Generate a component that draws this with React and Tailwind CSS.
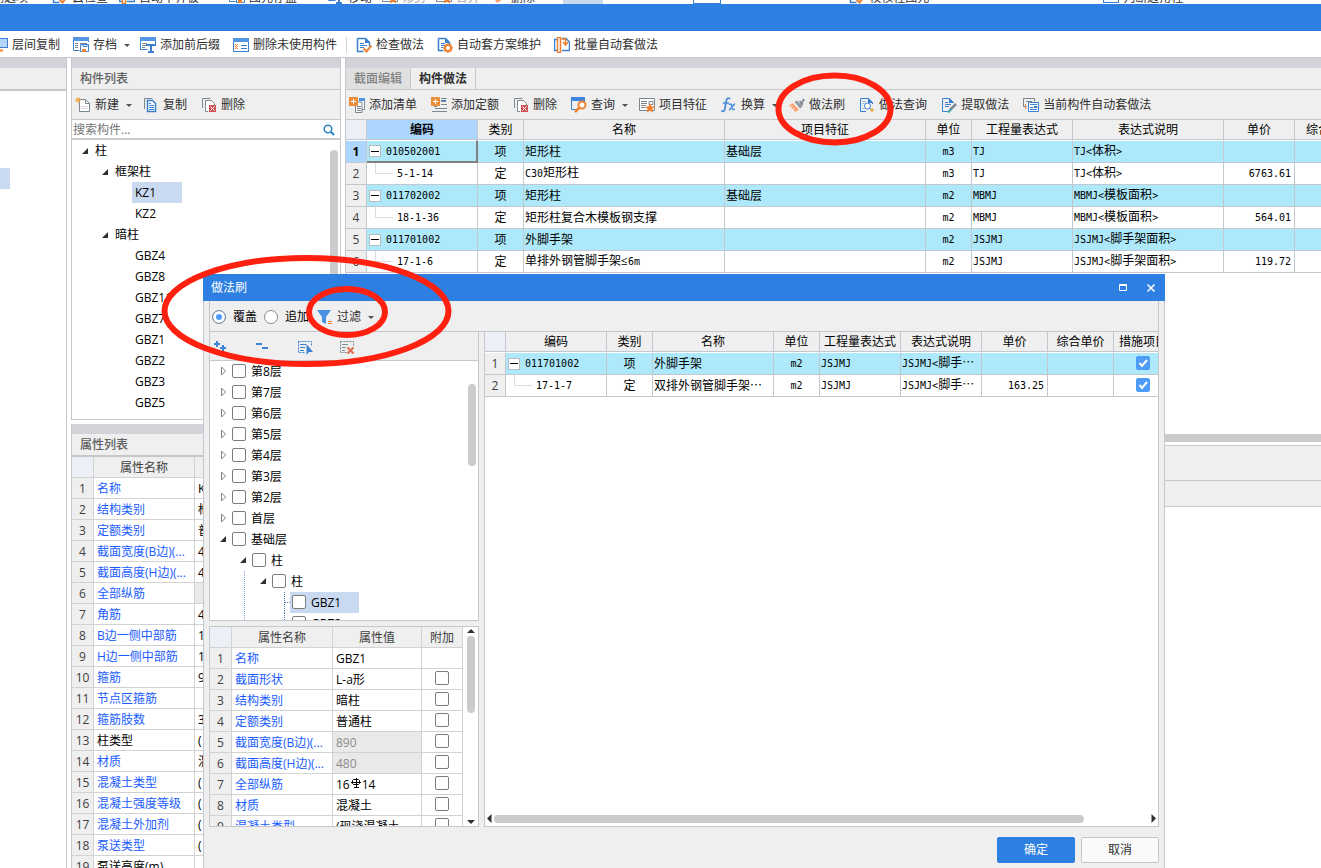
import { Fragment } from 'react';

const BLUE = '#3b7fd0';
const ORANGE = '#ee8130';
const GRAY = '#7d8791';

/* 16x16 toolbar icons */
const ICONS = {
  monitor: (
    <>
      <rect x="3.5" y="1.5" width="12" height="9" fill="#b5d5fb" stroke={BLUE} />
      <path d="M6 13.5h5" stroke={ORANGE} strokeWidth="2" />
    </>
  ),
  archive: (
    <>
      <path d="M.5 1v12.500h6M.5 1h15v4" stroke={BLUE} fill="none" />
      <path d="M0 0h16v4H0z" fill="#5596e4" />
      <path d="M2 6.500h3M2 8.500h3M2 10.500h3M7 6.500h7" stroke={GRAY} />
      <path d="M7.500 7.500h8v7h-8z" fill="#fff" stroke={BLUE} />
      <path d="M10 7.500v2h4v-2" stroke={BLUE} fill="none" />
      <path d="M9 12h4v3H9z" fill={ORANGE} />
    </>
  ),
  affix: (
    <>
      <path d="M.5 1v11.500h7M15.500 1v8" stroke={BLUE} fill="none" />
      <path d="M0 0h16v4H0z" fill="#5596e4" />
      <path d="M2 6.500h5M2 8.500h5M2 10.500h3" stroke={GRAY} />
      <path d="M6 7h9v2H6zM10 7h2v9h-2zM8 14h6v2H8z" fill={BLUE} />
    </>
  ),
  unused: (
    <>
      <rect x=".5" y="1.500" width="15" height="13" fill="#fff" stroke={BLUE} />
      <path d="M0 1h16v4H0z" fill="#5596e4" />
      <path d="M2 7h1v1H2zM4 7h1v1H4zM3 8h1v1H3zM2 9h1v1H2zM4 9h1v1H4zM3 10h1v1H3zM2 11h1v1H2zM4 11h1v1H4z" fill={ORANGE} />
      <path d="M8 8.500h6M8 11.500h6" stroke={BLUE} />
    </>
  ),
  check: (
    <>
      <path d="M1.500 1.500h8l4 4v4M1.500 1.500v13h6" fill="none" stroke={BLUE} strokeWidth="1.500" />
      <path d="M9 1v5h5z" fill={BLUE} />
      <path d="M4 6.500h4M4 8.500h7M4 10.500h4" stroke={BLUE} />
      <path d="M7.500 11.500l3 3 5-6" fill="none" stroke={ORANGE} strokeWidth="2" />
    </>
  ),
  scheme: (
    <>
      <path d="M1.500 1.500h7l4 4v2M1.500 1.500v12h5" fill="none" stroke={BLUE} strokeWidth="1.500" />
      <path d="M8 1v5h5z" fill={BLUE} />
      <path d="M4 6.500h4M4 8.500h4M4 10.500h2" stroke={BLUE} />
      <circle cx="11" cy="11" r="3" fill="#fff" stroke={ORANGE} strokeWidth="2" />
      <path d="M11 6v2M11 14v2M6 11h2M14 11h2M7.500 7.500l1.500 1.500M13 13l1.500 1.500M14.500 7.500l-1.500 1.500M9 13l-1.500 1.500" stroke={ORANGE} strokeWidth="1.500" />
    </>
  ),
  batch: (
    <>
      <path d="M3 2.500H.5v11H3" fill="none" stroke={BLUE} strokeWidth="1.500" />
      <path d="M3.500.5h3v15h-3z" fill="#fff" stroke={ORANGE} strokeWidth="1.500" />
      <path d="M8 1.500h4l3.500 3.500v8.500H8" fill="none" stroke={BLUE} strokeWidth="1.500" />
      <path d="M7.500 2h4V7M9 5l2.500 3L14 5" fill="none" stroke={ORANGE} strokeWidth="1.500" />
    </>
  ),
  create: (
    <>
      <path d="M4.500 2.500h6l4 4v8h-10z" fill="#fff" stroke={GRAY} />
      <path d="M10.500 2.500v4h4" fill="none" stroke={GRAY} />
      <path d="M6 9.500h7M6 11.500h7" stroke="#e2d8e2" />
      <path d="M1 1l4 4M5 1L1 5M3 0v6M0 3h6" stroke="#f0a63c" />
    </>
  ),
  copy: (
    <>
      <path d="M1.500 12V1.500h8" fill="none" stroke={GRAY} />
      <path d="M4.500 3.500h5l3 3v8h-8z" fill="#fff" stroke={BLUE} strokeWidth="1.500" />
      <path d="M6 8.500h5M6 10.500h5M6 12.500h5M6 6.500h2" stroke={BLUE} />
    </>
  ),
  remove: (
    <>
      <path d="M1.500 11V1.500h8" fill="none" stroke={GRAY} />
      <path d="M7 14.500H4.500v-11h6l3 3V8" fill="#fff" stroke={GRAY} />
      <path d="M8 8h7v7H8z" fill="#d05058" />
      <path d="M9.500 9.500l4 4M13.500 9.500l-4 4" stroke="#fff" />
    </>
  ),
  addList: (
    <>
      <path d="M11 2.500h4.500v10H13M6.500 9v6.500H13V5H9" fill="#fff" stroke={GRAY} />
      <path d="M10 1h6v3h-6z" fill="#5596e4" />
      <path d="M8 9.500h4M8 11.500h4M8 13.500h4" stroke={GRAY} />
      <path d="M0 0h9v9H0z" fill="#ea8f3c" />
      <path d="M4.500 2v5M2 4.500h5" stroke="#fff" />
    </>
  ),
  addQuota: (
    <>
      <path d="M10 1.500h6M10 4.500h5M10 7.500h6M4 11.500h12M1 14.500h15M3 9.500h3" stroke={GRAY} />
      <path d="M10 3.500h5" stroke={BLUE} />
      <path d="M0 0h9v9H0z" fill="#ea8f3c" />
      <path d="M4.500 2v5M2 4.500h5" stroke="#fff" />
    </>
  ),
  query: (
    <>
      <path d="M.500 1v11.500h4M13.500 2v3" fill="none" stroke={BLUE} />
      <path d="M0 0h14v4H0z" fill="#3f86dc" />
      <circle cx="11" cy="8" r="3.500" fill="#fff" stroke={ORANGE} strokeWidth="2" />
      <path d="M8.500 10.500l-4.500 4.500" stroke={ORANGE} strokeWidth="2.500" />
    </>
  ),
  feature: (
    <>
      <path d="M.500 1.500h15v12H.5z" fill="#fff" stroke={GRAY} />
      <path d="M2 4.500h6M2 6.500h6M2 8.500h5M2 10.500h4M10 4.500h4v3h-4z" fill="none" stroke={GRAY} />
      <path d="M11 6l1.500 3.300 3.500.4-2.600 2.400.7 3.500-3.100-1.800-3.100 1.800.7-3.500L6 9.700l3.500-.4z" fill={ORANGE} />
    </>
  ),
  fx: (
    <g fill="none" stroke="#4a8ddb" strokeLinecap="round">
      <path d="M8.500 1.500c-2-1-3 .5-3.300 2.500l-1.400 8c-.4 2-1.300 3-2.800 2" strokeWidth="1.800" />
      <path d="M2.500 6h5" strokeWidth="1.500" />
      <path d="M8.500 7.500c1.500-1 2 0 2.300 1.500l.7 2.500c.4 1.200 1 1.500 1.800.8M13.500 7l-5 5.800" strokeWidth="1.500" />
    </g>
  ),
  brush: (
    <>
      <path d="M10 4l1.500-.5L12.500 5 14 1.500l2 1.500-2.500 3 1 1-2 2z" fill={GRAY} />
      <path d="M5.500 5L8 3.500l5.500 6L11 11.500z" fill="#8d99a5" />
      <path d="M0 8.500L4.500 6l6 6L6.500 15z" fill="#fba070" />
      <path d="M4.500 6.500l6 6" stroke="#fff" />
      <path d="M2 10l1.500-1M4 12.500l1.500-1.500" stroke="#fff" />
    </>
  ),
  search: (
    <>
      <path d="M7 14.500H1.500v-13h8l4 4V7" fill="none" stroke={BLUE} />
      <path d="M9 1v5h5z" fill={BLUE} />
      <path d="M3.500 4.500h3M3.500 6.500h2M3.500 11.500h2" stroke="#8fb8ea" />
      <circle cx="8.500" cy="9" r="3" fill="#fff" stroke={BLUE} />
      <path d="M10.500 11l1 1" stroke={BLUE} />
      <path d="M13 11l2 2-2 2-2-2z" fill="#eda02f" />
    </>
  ),
  extract: (
    <>
      <path d="M7 14.500H1.500v-13h7l4 4" fill="none" stroke={BLUE} />
      <path d="M8 1v5h5z" fill={BLUE} />
      <path d="M4 5.500h3M4 7.500h6M4 9.500h4" stroke={BLUE} />
      <path d="M15 7l-6 6" stroke={GRAY} strokeWidth="2.500" />
      <path d="M10 12.500l-3 3" stroke="#35a5b5" strokeWidth="2" />
    </>
  ),
  autoSet: (
    <>
      <path d="M.500 1.500h11v3M.500 1.500v8h3" fill="none" stroke={GRAY} />
      <path d="M3 4.500h6" stroke={GRAY} />
      <path d="M2.500 7v6" stroke={ORANGE} strokeDasharray="2 1" />
      <path d="M5.500 5.500h10v9h-10z" fill="#fff" stroke={BLUE} />
      <path d="M7 7.500h7M7 10.500h3M7 12.500h7M11 9.500h3v1h-3z" stroke={BLUE} />
    </>
  ),
  filter: (
    <>
      <path d="M0 1h14L9 8v7l-4-2V8z" fill="#4a90e2" />
      <path d="M11 12.500h4M11 14.500h4" stroke={ORANGE} />
    </>
  ),
  expand: <path d="M4 1v6M1 4h6M10 5v6M7 8h6" stroke="#3f83d3" strokeWidth="2" />,
  collapse: <path d="M1 4h6M7 8h6" stroke="#3f83d3" strokeWidth="2" />,
  select: (
    <>
      <path d="M1.500 1.500h13v4M1.500 1.500v11h7" fill="none" stroke={BLUE} strokeDasharray="2 1" />
      <path d="M3 4.500h6M3 7.500h5M3 10.500h4" stroke={BLUE} />
      <path d="M9.500 4v11l2.500-3h4z" fill="#3a7fd3" />
    </>
  ),
  deselect: (
    <>
      <path d="M1.500 1.500h13v4M1.500 1.500v11h6" fill="none" stroke={GRAY} strokeDasharray="2 1" />
      <path d="M3 4.500h6M3 7.500h4M3 10.500h3" stroke={GRAY} />
      <path d="M8.500 7.500l6 6M14.500 7.500l-6 6" stroke="#dd6a4c" strokeWidth="2" />
    </>
  ),
};

function Icon({ name }) {
  return (
    <svg className="size-4 shrink-0" viewBox="0 0 16 16" fill="none" aria-hidden="true">
      {ICONS[name]}
    </svg>
  );
}

function Caret() {
  return (
    <svg className="-mr-1.5 w-3 h-4 shrink-0" viewBox="0 0 12 16" aria-hidden="true">
      <path d="M3 7h6L6 10z" fill="#505050" />
    </svg>
  );
}

function ToolButton({ icon, label, caret }) {
  return (
    <button type="button" className="flex items-center gap-1 shrink-0 whitespace-nowrap text-[#303030]">
      <Icon name={icon} />
      {label}
      {caret && <Caret />}
    </button>
  );
}

function Band() {
  return <div className="h-[10px] shrink-0 bg-[#d3d4d9]"></div>;
}

/* Narrow fixed-pitch Latin beside full-width Chinese */
function Mono({ children }) {
  return children.split(/([\x20-\x7e]+)/).map((part, i) =>
    i % 2 ? (
      <span key={i} className="font-['DejaVu_Sans_Mono',monospace] text-[10px]">{part}</span>
    ) : (
      <Fragment key={i}>{part}</Fragment>
    )
  );
}

function Check({ checked = false, label }) {
  return (
    <span className="relative block size-[14px] shrink-0">
      <input
        type="checkbox"
        aria-label={label}
        defaultChecked={checked}
        className="peer block size-[14px] appearance-none rounded-[2px] border border-[#7c7c7c] bg-white checked:border-[#4d9df8] checked:bg-[#4d9df8]"
      />
      <svg className="absolute inset-0 hidden peer-checked:block pointer-events-none" viewBox="0 0 14 14" fill="none">
        <path d="M3.500 7l2.500 3 5-6" stroke="#fff" strokeWidth="2" />
      </svg>
    </span>
  );
}

function Arrow({ open }) {
  return (
    <svg className="size-2 shrink-0" viewBox="0 0 8 8" aria-hidden="true">
      {open ? (
        <path d="M7 1v6H1z" fill="#303030" />
      ) : (
        <path d="M2.500 0l4 4-4 4z" fill="#fff" stroke="#808080" />
      )}
    </svg>
  );
}

/* ---------- left hand tree ---------- */

const COMPONENTS = [
  { label: '柱', pad: 'pl-[9px]', open: true },
  { label: '框架柱', pad: 'pl-[29px]', open: true },
  { label: 'KZ1', selected: true },
  { label: 'KZ2' },
  { label: '暗柱', pad: 'pl-[29px]', open: true },
  { label: 'GBZ4' },
  { label: 'GBZ8' },
  { label: 'GBZ11' },
  { label: 'GBZ7' },
  { label: 'GBZ1' },
  { label: 'GBZ2' },
  { label: 'GBZ3' },
  { label: 'GBZ5' },
];

function ComponentList() {
  return (
    <section className="h-[362px] shrink-0 flex flex-col border-x border-b border-[#c6c8cd]">
      <Band />
      <h2 className="h-[22px] pl-2 flex items-center bg-[#efefef] border-b border-[#c6c8cd] font-medium text-[#606060]">构件列表</h2>
      <div className="h-[30px] px-[3px] flex items-center gap-[14px] bg-[#efefef] border-b border-[#c6c8cd]">
        <ToolButton icon="create" label="新建" caret />
        <ToolButton icon="copy" label="复制" />
        <ToolButton icon="remove" label="删除" />
      </div>
      <div className="h-5 pt-px pr-1 flex items-center border-b-2 border-[#cbccd0]">
        <input aria-label="搜索构件" placeholder="搜索构件..." className="flex-1 min-w-0 pl-px outline-none placeholder:text-[#757575]" />
        <svg className="size-3 mr-px" viewBox="0 0 12 12" fill="none" stroke="#2a82c4" strokeWidth="1.5">
          <circle cx="5" cy="5" r="3.800" />
          <path d="M8 8l3 3" strokeWidth="2" />
        </svg>
      </div>
      <div className="flex-1 min-h-0 flex">
        <ul className="flex-1">
          {COMPONENTS.map((c) =>
            c.pad ? (
              <li key={c.label} className={`h-[21px] flex items-center gap-[6px] ${c.pad}`}>
                <Arrow open />
                {c.label}
              </li>
            ) : (
              <li key={c.label} className="h-[21px] pl-[60px] flex">
                <span className={`w-[50px] pl-[3px] flex items-center ${c.selected ? 'bg-[#c9d9f0]' : ''}`}>{c.label}</span>
              </li>
            )
          )}
        </ul>
        <div className="w-2 mr-0.5 mt-[10px] mb-4 rounded-full bg-[#cbcbcb]"></div>
      </div>
    </section>
  );
}

/* ---------- property tables ---------- */

const COLUMN_PROPS = [
  ['名称', 'K'],
  ['结构类别', '框'],
  ['定额类别', '普'],
  ['截面宽度(B边)(...', '4'],
  ['截面高度(H边)(...', '4'],
  ['全部纵筋', '', 'gray'],
  ['角筋', '4'],
  ['B边一侧中部筋', '1'],
  ['H边一侧中部筋', '1'],
  ['箍筋', '9'],
  ['节点区箍筋', ''],
  ['箍筋肢数', '3'],
  ['柱类型', '(', 'black'],
  ['材质', '混'],
  ['混凝土类型', '('],
  ['混凝土强度等级', '('],
  ['混凝土外加剂', '('],
  ['泵送类型', '('],
  ['泵送高度(m)', '', 'black'],
];

const PROP_TH = 'pt-px border-r border-b border-[#d2d2d2] font-normal text-[#404040]';
const PROP_TD = 'border-r border-b border-[#d2d2d2] whitespace-nowrap overflow-hidden';

function PropertyList() {
  return (
    <section className="mt-1 flex-1 min-h-0 overflow-hidden border-x border-[#c6c8cd]">
      <Band />
      <h2 className="h-[23px] pl-2 flex items-center bg-[#efefef] border-b-2 border-[#c6c6c6] font-medium text-[#606060]">属性列表</h2>
      <table className="w-full table-fixed border-separate border-spacing-0">
        <thead>
          <tr className="h-[21px]">
            <th className={`w-[22px] ${PROP_TH} bg-[#ecf0f6]`}></th>
            <th className={`w-[101px] ${PROP_TH} bg-[#efefef]`}>属性名称</th>
            <th className={`${PROP_TH} bg-[#efefef]`}>属性值</th>
          </tr>
        </thead>
        <tbody>
          {COLUMN_PROPS.map(([name, value, tone], i) => (
            <tr key={name} className="h-[21px]">
              <td className={`${PROP_TD} pt-px bg-[#efefef] text-center text-[#404040]`}>{i + 1}</td>
              <td className={`${PROP_TD} pt-px pl-[3px] ${tone === 'black' ? 'text-black' : 'text-[#1a5cff]'}`}>{name}</td>
              <td className={`${PROP_TD} pt-px pl-[3px] ${tone === 'gray' ? 'bg-[#e9e9e9]' : ''}`}>{value}</td>
            </tr>
          ))}
        </tbody>
      </table>
    </section>
  );
}

function Rebar() {
  return (
    <svg className="inline-block w-3 h-[10px] -mt-1" viewBox="0 0 12 10" fill="none" stroke="#000">
      <path d="M3.500 1.500h5l1 1v3l-1 1h-5l-1-1v-3zM6.500 0v9M4 9.500h5M1 4.500h10" />
    </svg>
  );
}

const BRUSH_PROPS = [
  ['名称', 'GBZ1'],
  ['截面形状', 'L-a形'],
  ['结构类别', '暗柱'],
  ['定额类别', '普通柱'],
  ['截面宽度(B边)(...', '890', true],
  ['截面高度(H边)(...', '480', true],
  ['全部纵筋', <>16<Rebar />14</>],
  ['材质', '混凝土'],
  ['混凝土类型', '(现浇混凝土'],
];

function BrushProperties() {
  return (
    <div className="mt-[5px] h-[201px] flex overflow-hidden bg-white border border-[#c6c8cd]">
      <table className="w-[253px] shrink-0 self-start table-fixed border-separate border-spacing-0">
        <thead>
          <tr className="h-[21px]">
            <th className={`w-[22px] ${PROP_TH} bg-[#ecf0f6]`}></th>
            <th className={`w-[101px] ${PROP_TH} bg-[#efefef]`}>属性名称</th>
            <th className={`w-[89px] ${PROP_TH} bg-[#efefef]`}>属性值</th>
            <th className={`w-[41px] ${PROP_TH} bg-[#efefef]`}>附加</th>
          </tr>
        </thead>
        <tbody>
          {BRUSH_PROPS.map(([name, value, locked], i) => (
            <tr key={name} className="h-[21px]">
              <td className={`${PROP_TD} pt-px bg-[#efefef] text-center text-[#404040]`}>{i + 1}</td>
              <td className={`${PROP_TD} pt-px pl-[3px] text-[#1a5cff]`}>{name}</td>
              <td className={`${PROP_TD} pt-px pl-[3px] ${locked ? 'bg-[#e9e9e9] text-[#8c8c8c]' : ''}`}>{value}</td>
              <td className={`${PROP_TD} pb-0.5 pr-px`}>
                {i > 0 && (
                  <div className="flex justify-center">
                    <Check label={name} />
                  </div>
                )}
              </td>
            </tr>
          ))}
        </tbody>
      </table>
      <div className="flex-1 flex flex-col items-center justify-between">
        <svg className="w-2 h-2" viewBox="0 0 8 8"><path d="M4 2l4 4H0z" fill="#303030" /></svg>
        <div className="w-2 flex-1 mt-px mb-[105px] rounded-full bg-[#cbcbcb]"></div>
        <svg className="w-2 h-2" viewBox="0 0 8 8"><path d="M4 6l4-4H0z" fill="#303030" /></svg>
      </div>
    </div>
  );
}

/* ---------- bill tables ---------- */

function CodeCell({ code, child }) {
  return child ? (
    <div className="h-full pl-2 flex">
      <span className="w-[18px] h-[11px] border-l border-b border-[#dcdcdc]"></span>
      <span className="pl-1 flex items-center"><Mono>{code}</Mono></span>
    </div>
  ) : (
    <div className="pl-0.5 flex items-center gap-[5px]">
      <button type="button" aria-label="折叠" className="size-3 flex items-center justify-center bg-white border border-[#b9bcc2]">
        <span className="w-2 h-px bg-black"></span>
      </button>
      <span><Mono>{code}</Mono></span>
    </div>
  );
}

function BillTable({ width, cols, rows, active }) {
  return (
    <table className={`${width} table-fixed border-separate border-spacing-0`}>
      <thead>
        <tr className="h-5">
          <th className="w-[21px] bg-[#ecf0f6] border-r border-b border-[#c3c7cf]"></th>
          {cols.map((c, i) => (
            <th
              key={c.label}
              className={`${c.width} pt-px border-r border-b border-[#c3c7cf] whitespace-nowrap ${
                active && i === 0 ? 'bg-[#add6ff] font-bold' : 'bg-[#efefef] font-normal'
              }`}
            >
              {c.label}
            </th>
          ))}
        </tr>
      </thead>
      <tbody>
        {rows.map((row, r) => {
          const parent = row[1] === '项';
          const h = r === 0 ? 'h-[23px] border-t border-t-white' : 'h-[22px]';
          return (
            <tr key={r}>
              <td
                className={`${h} pt-px border-r border-b border-[#c3c7cf] text-center ${
                  active && r === 0 ? 'bg-[#add6ff] font-bold text-black' : 'bg-[#efefef] text-[#404040]'
                }`}
              >
                {r + 1}
              </td>
              {cols.map((c, i) => (
                <td
                  key={c.label}
                  className={`${h} whitespace-nowrap overflow-hidden ${parent ? 'bg-[#aee9fb]' : 'bg-white'} ${
                    active && r === 0 && i === 0 ? 'border-r-2 border-b-2 border-[#808080]' : 'border-r border-b border-[#c3c7cf]'
                  } ${c.cell}`}
                >
                  {i === 0 ? (
                    <CodeCell code={row[0]} child={!parent} />
                  ) : c.check ? (
                    <div className="flex justify-center"><Check checked label={c.label} /></div>
                  ) : (
                    <Mono>{row[i] || ''}</Mono>
                  )}
                </td>
              ))}
            </tr>
          );
        })}
      </tbody>
    </table>
  );
}

const MAIN_COLS = [
  { label: '编码', width: 'w-[111px]', cell: '' },
  { label: '类别', width: 'w-[46px]', cell: 'text-center' },
  { label: '名称', width: 'w-[201px]', cell: 'pl-px' },
  { label: '项目特征', width: 'w-[201px]', cell: 'pl-px' },
  { label: '单位', width: 'w-[46px]', cell: 'text-center' },
  { label: '工程量表达式', width: 'w-[101px]', cell: 'pl-px' },
  { label: '表达式说明', width: 'w-[151px]', cell: 'pl-px' },
  { label: '单价', width: 'w-[71px]', cell: 'pr-[3px] text-right' },
  { label: '综合单价', width: 'w-[71px]', cell: '' },
];

const MAIN_ROWS = [
  ['010502001', '项', '矩形柱', '基础层', 'm3', 'TJ', 'TJ<体积>', ''],
  ['5-1-14', '定', 'C30矩形柱', '', 'm3', 'TJ', 'TJ<体积>', '6763.61'],
  ['011702002', '项', '矩形柱', '基础层', 'm2', 'MBMJ', 'MBMJ<模板面积>', ''],
  ['18-1-36', '定', '矩形柱复合木模板钢支撑', '', 'm2', 'MBMJ', 'MBMJ<模板面积>', '564.01'],
  ['011701002', '项', '外脚手架', '', 'm2', 'JSJMJ', 'JSJMJ<脚手架面积>', ''],
  ['17-1-6', '定', '单排外钢管脚手架≤6m', '', 'm2', 'JSJMJ', 'JSJMJ<脚手架面积>', '119.72'],
];

const BRUSH_COLS = [
  { label: '编码', width: 'w-[101px]', cell: '' },
  { label: '类别', width: 'w-[46px]', cell: 'text-center' },
  { label: '名称', width: 'w-[121px]', cell: 'pl-px' },
  { label: '单位', width: 'w-[46px]', cell: 'text-center' },
  { label: '工程量表达式', width: 'w-[81px]', cell: 'pl-px' },
  { label: '表达式说明', width: 'w-[81px]', cell: 'pl-px' },
  { label: '单价', width: 'w-[66px]', cell: 'pr-[3px] text-right' },
  { label: '综合单价', width: 'w-[66px]', cell: '' },
  { label: '措施项目', width: 'w-[59px]', cell: 'pb-px', check: true },
];

const BRUSH_ROWS = [
  ['011701002', '项', '外脚手架', 'm2', 'JSJMJ', 'JSJMJ<脚手⋯', ''],
  ['17-1-7', '定', '双排外钢管脚手架⋯', 'm2', 'JSJMJ', 'JSJMJ<脚手⋯', '163.25'],
];

function Practice() {
  return (
    <section className="ml-1 flex-1 min-w-0 flex flex-col border-l border-[#c6c8cd]">
      <Band />
      <div role="tablist" className="h-[22px] flex bg-[#efefef] border-b border-[#c6c8cd]">
        <button type="button" role="tab" className="w-[65px] bg-[#e0e0e0] border-r border-[#c6c8cd] font-medium text-[#808080]">截面编辑</button>
        <button type="button" role="tab" aria-selected="true" className="w-[65px] border-r border-[#c6c8cd] font-bold text-[#303030]">构件做法</button>
      </div>
      <div className="h-[30px] px-[3px] flex items-center gap-[14px] bg-[#efefef] border-b border-[#c6c8cd]">
        <ToolButton icon="addList" label="添加清单" />
        <ToolButton icon="addQuota" label="添加定额" />
        <ToolButton icon="remove" label="删除" />
        <ToolButton icon="query" label="查询" caret />
        <ToolButton icon="feature" label="项目特征" />
        <ToolButton icon="fx" label="换算" caret />
        <ToolButton icon="brush" label="做法刷" />
        <ToolButton icon="search" label="做法查询" />
        <ToolButton icon="extract" label="提取做法" />
        <ToolButton icon="autoSet" label="当前构件自动套做法" />
      </div>
      <div className="h-[314px] overflow-hidden bg-white">
        <BillTable width="w-[1020px]" cols={MAIN_COLS} rows={MAIN_ROWS} active />
      </div>
      <div className="h-2 bg-[#cbcbcb]"></div>
      <div className="mt-[3px] h-9 bg-[#efefef] border-y border-[#c6c8cd]"></div>
      <div className="h-[26px] bg-[#efefef] border-b border-[#c6c8cd]"></div>
    </section>
  );
}

/* ---------- dialog ---------- */

const FLOORS = ['第8层', '第7层', '第6层', '第5层', '第4层', '第3层', '第2层', '首层'];

function TreeRow({ label, pad, open }) {
  return (
    <li className={`h-[21px] pb-px flex items-center ${pad}`}>
      <Arrow open={open} />
      <label className="ml-[5px] flex items-center gap-[5px]">
        <Check label={label} />
        <span className="pt-px">{label}</span>
      </label>
    </li>
  );
}

function LeafRow({ label, selected }) {
  return (
    <li className="h-[21px] pl-[34px] flex">
      <span className="ml-[40px] w-[6px] flex items-center border-l border-dotted border-[#4c7fb8]">
        <span className="w-full border-t border-dotted border-[#4c7fb8]"></span>
      </span>
      <label className={`w-[69px] pl-0.5 pb-px flex items-center gap-[5px] ${selected ? 'bg-[#c9d9f0]' : ''}`}>
        <Check label={label} />
        <span className="pt-px">{label}</span>
      </label>
    </li>
  );
}

function FloorTree() {
  return (
    <div className="h-[260px] flex overflow-hidden bg-white border-b border-[#c6c8cd]">
      <ul className="flex-1">
        {FLOORS.map((f) => <TreeRow key={f} label={f} pad="pl-[9px]" />)}
        <TreeRow label="基础层" pad="pl-[9px]" open />
        <TreeRow label="柱" pad="pl-[29px]" open />
        <li className="relative">
          <span className="absolute left-[34px] inset-y-0 border-l border-dotted border-[#7fa5cf]"></span>
          <ul>
            <TreeRow label="柱" pad="pl-[49px]" open />
            <LeafRow label="GBZ1" selected />
            <LeafRow label="GBZ2" />
          </ul>
        </li>
      </ul>
      <div className="w-2 h-[82px] mt-[23px] mr-0.5 rounded-full bg-[#cbcbcb]"></div>
    </div>
  );
}

function Radio({ label, checked }) {
  return (
    <label className="flex items-center gap-[7px]">
      <input
        type="radio"
        name="mode"
        defaultChecked={checked}
        className="size-[14px] appearance-none rounded-full border border-[#8a8a8a] bg-white checked:bg-[#4d9df8] checked:shadow-[inset_0_0_0_3px_#fff]"
      />
      {label}
    </label>
  );
}

function BrushDialog() {
  return (
    <div role="dialog" aria-label="做法刷" className="absolute left-[203px] right-[156px] top-[274px] bottom-0 flex flex-col bg-[#efefef]">
      <header className="h-[27px] shrink-0 pl-2 pr-[9px] flex items-center bg-[#2d80e2] text-white">
        <span className="flex-1">做法刷</span>
        <button type="button" aria-label="最大化" className="mr-[18px]">
          <svg className="block size-[10px]" viewBox="0 0 10 10" fill="none" stroke="#fff">
            <path d="M1.500 1.500h7v6h-7zM1 2.500h8" />
          </svg>
        </button>
        <button type="button" aria-label="关闭">
          <svg className="block size-[10px]" viewBox="0 0 10 10" fill="none" stroke="#fff" strokeWidth="1.500">
            <path d="M1.500 1.500l7 7M8.500 1.500l-7 7" />
          </svg>
        </button>
      </header>
      <div className="flex-1 min-h-0 px-[5px] flex flex-col border-x border-[#c0c8d4]">
        <div className="h-[31px] shrink-0 pl-0.5 pt-px flex items-center border-x border-b border-[#c6c8cd]">
          <Radio label="覆盖" checked />
          <span className="ml-[7px]"><Radio label="追加" /></span>
          <span className="ml-2"><ToolButton icon="filter" label="过滤" caret /></span>
        </div>
        <div className="flex">
          <div className="w-[270px] shrink-0">
            <div className="border-x border-[#c6c8cd]">
              <div className="h-[29px] pl-[3px] pt-1 flex items-center gap-[26px] border-b border-[#c6c8cd]">
                <button type="button" aria-label="展开"><Icon name="expand" /></button>
                <button type="button" aria-label="收起"><Icon name="collapse" /></button>
                <button type="button" aria-label="全选"><Icon name="select" /></button>
                <button type="button" aria-label="取消选择"><Icon name="deselect" /></button>
              </div>
              <FloorTree />
            </div>
            <BrushProperties />
          </div>
          <div className="ml-[5px] flex-1 min-w-0 flex flex-col justify-between overflow-hidden bg-white border-x border-b border-[#c6c8cd]">
            <BillTable width="w-[688px]" cols={BRUSH_COLS} rows={BRUSH_ROWS} />
            <div className="h-[15px] flex items-center">
              <svg className="size-[9px] shrink-0" viewBox="0 0 9 9"><path d="M6.500 0v9l-4.500-4.500z" fill="#303030" /></svg>
              <div className="flex-1">
                <div className="w-[90%] h-2 rounded-full bg-[#cbcbcb]"></div>
              </div>
              <svg className="size-[9px] shrink-0" viewBox="0 0 9 9"><path d="M2.500 0v9l4.500-4.500z" fill="#303030" /></svg>
            </div>
          </div>
        </div>
        <footer className="pt-[10px] flex justify-end gap-1.5">
          <button type="button" className="w-[78px] h-[26px] rounded-[2px] bg-[#2d80e2] text-white">确定</button>
          <button type="button" className="w-[78px] h-[26px] rounded-[2px] border border-[#c3c7cf] bg-[#fafafa] text-[#303030]">取消</button>
        </footer>
      </div>
    </div>
  );
}

/* ---------- page ---------- */

const RIBBON = [
  { label: '删选项', gap: '-ml-2' },
  { label: '云检查', gap: 'ml-[24px]', icon: 'check' },
  { label: '自动平齐板', gap: 'ml-[11px]', icon: 'batch' },
  { label: '图元存盘', gap: 'ml-[30px]', icon: 'archive' },
  { label: '移动', gap: 'ml-[31px]', icon: 'affix' },
  { label: '修剪', gap: 'ml-[10px]', icon: 'feature', muted: true },
  { label: '合并', gap: 'ml-[10px]', icon: 'feature', muted: true },
  { label: '删除', gap: 'ml-[11px]', icon: 'brush' },
];

function Ribbon() {
  return (
    <div className="h-1 shrink-0 flex items-end overflow-hidden whitespace-nowrap leading-3">
      {RIBBON.map((r) => (
        <span key={r.label} className={`${r.gap} flex items-end gap-1 ${r.muted ? 'text-[#a5a5a5]' : 'text-[#303030]'}`}>
          {r.icon && <Icon name={r.icon} />}
          {r.label}
        </span>
      ))}
      <span className="ml-[28px] w-10 h-1 bg-[#c9d9f0]"></span>
      <span className="ml-[90px] w-7 h-1 border-x border-b border-[#3b7fd0]"></span>
      <span className="ml-[128px] flex items-end gap-1 text-[#303030]"><Icon name="check" />校核柱图元</span>
      <span className="ml-[174px] flex items-end gap-1 text-[#303030]"><Icon name="unused" />判断边角柱</span>
    </div>
  );
}

function App() {
  return (
    <div className="relative h-screen flex flex-col overflow-hidden bg-white text-black text-[12px] leading-4 font-['Open_Sans','Noto_Sans_CJK_SC',sans-serif]">
      <Ribbon />
      <div className="h-[27px] shrink-0 bg-[#2d80e2]"></div>

      <div className="h-[26px] shrink-0 -ml-2 pt-0.5 flex items-center gap-[13px] overflow-hidden">
        <ToolButton icon="monitor" label="层间复制" />
        <ToolButton icon="archive" label="存档" caret />
        <ToolButton icon="affix" label="添加前后缀" />
        <ToolButton icon="unused" label="删除未使用构件" />
        <span className="-mx-1 w-px h-4 bg-[#d0d2d6]"></span>
        <ToolButton icon="check" label="检查做法" />
        <ToolButton icon="scheme" label="自动套方案维护" />
        <ToolButton icon="batch" label="批量自动套做法" />
      </div>

      <main className="flex-1 min-h-0 flex border-t border-[#c6c8cd]">
        <aside className="w-[67px] shrink-0 border-r border-[#c6c8cd]">
          <Band />
          <div className="h-[23px] bg-[#efefef] border-b-2 border-[#c6c6c6]"></div>
          <div className="mt-[77px] w-[10px] h-[21px] bg-[#c9d9f0]"></div>
        </aside>
        <div className="ml-1 w-[270px] shrink-0 flex flex-col">
          <ComponentList />
          <PropertyList />
        </div>
        <Practice />
      </main>

      <BrushDialog />

      {/* Hand drawn highlights */}
      <svg className="absolute left-0 top-0 pointer-events-none" width="1000" height="400" fill="none" stroke="#ff2010" strokeWidth="6">
        <ellipse cx="834.500" cy="109" rx="56" ry="33.500" />
        <ellipse cx="306.500" cy="311" rx="142" ry="53" />
        <ellipse cx="347" cy="312" rx="38" ry="23" />
      </svg>
    </div>
  );
}

export default App;
